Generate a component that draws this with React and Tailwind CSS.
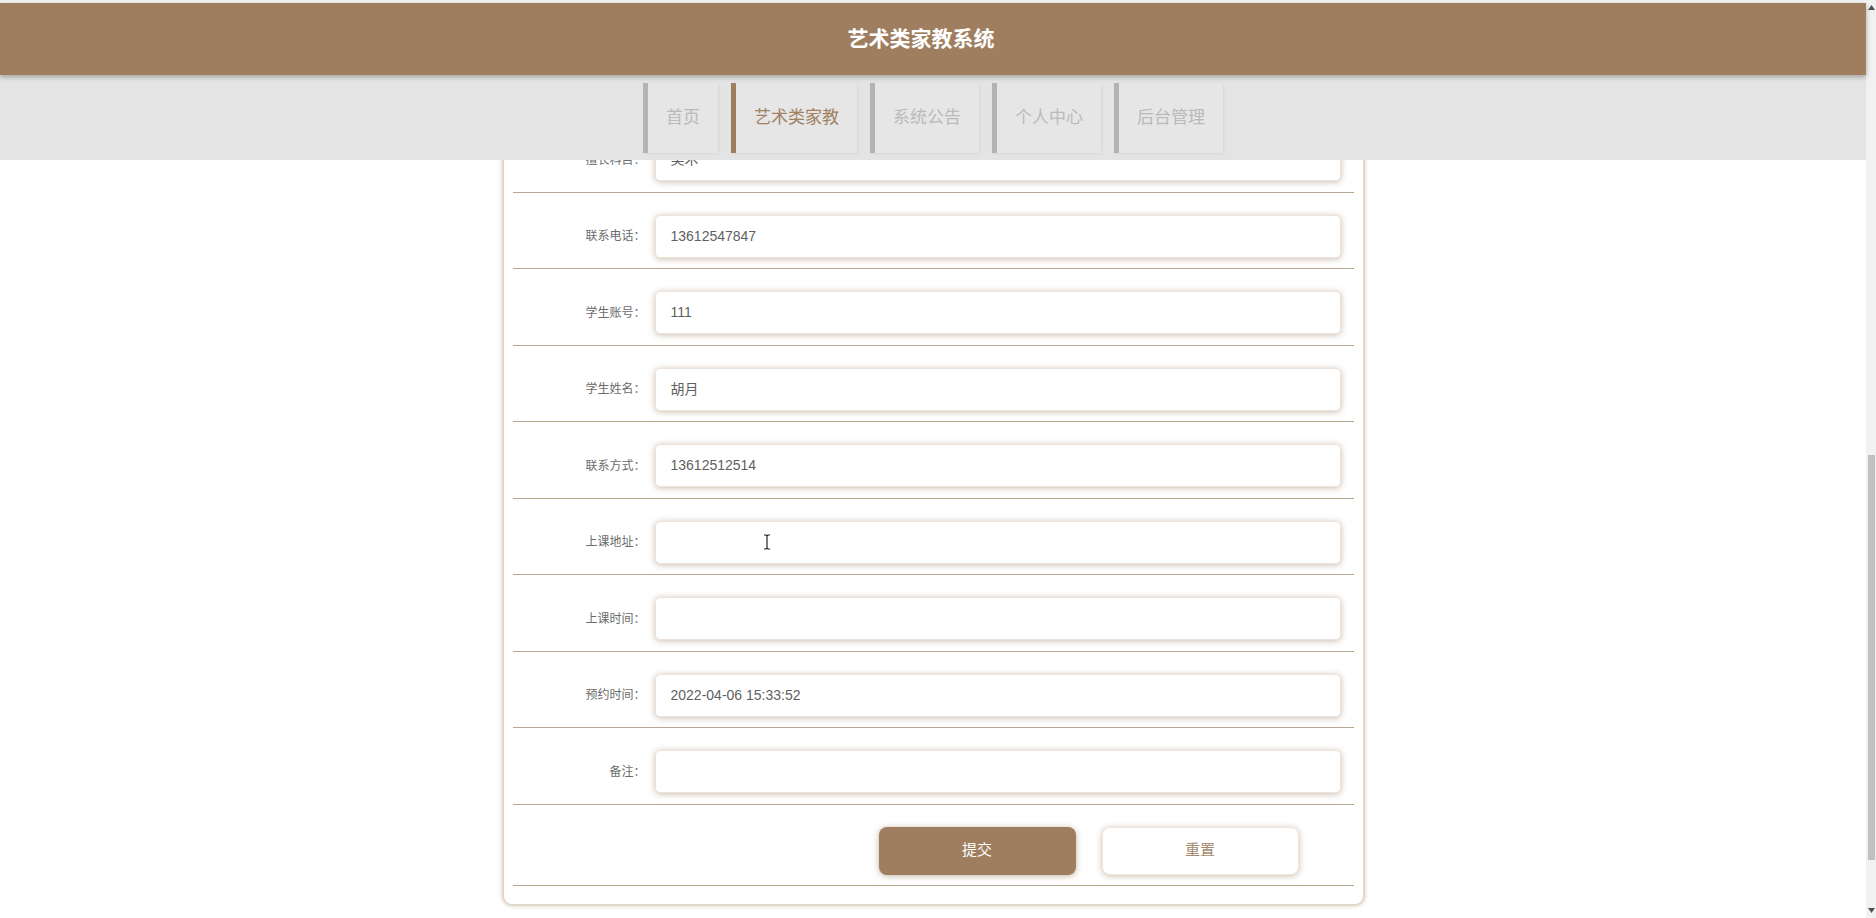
import React from "react";

const navItems = [
  { label: "首页" },
  { label: "艺术类家教", active: true },
  { label: "系统公告" },
  { label: "个人中心" },
  { label: "后台管理" },
];

const fields = [
  { label: "擅长科目：", value: "美术" },
  { label: "联系电话：", value: "13612547847" },
  { label: "学生账号：", value: "111" },
  { label: "学生姓名：", value: "胡月" },
  { label: "联系方式：", value: "13612512514" },
  { label: "上课地址：", value: "", cursor: true },
  { label: "上课时间：", value: "" },
  { label: "预约时间：", value: "2022-04-06 15:33:52" },
  { label: "备注：", value: "" },
];

const FormRow = ({ label, value, cursor }) => (
  <div className="flex items-center pt-[22px] pb-[10.5px] border-b border-[#b9a690]">
    <div className="w-[133px] text-right text-[12px] text-[#6b6b6b]">{label}</div>
    <div className="relative ml-[9px] w-[686px] h-[43px] flex items-center pl-[15px] bg-white rounded-[5px] border border-[#ece4dc] shadow-[0_1px_6px_rgba(140,105,70,0.45)] text-[14px] text-[#5f5f5f]">
      {value}
      {cursor && (
        <svg className="absolute left-[107px] top-[12px]" width="8" height="16" viewBox="0 0 8 16">
          <path d="M1 1h2l1 1 1-1h2M4 2v12M1 15h2l1-1 1 1h2" stroke="#222" strokeWidth="1.2" fill="none" />
        </svg>
      )}
    </div>
  </div>
);

export default function App() {
  return (
    <div
      className="flex w-full h-[918px] overflow-hidden bg-white"
      style={{ fontFamily: '"Liberation Sans", "Noto Sans CJK SC", sans-serif' }}
    >
      <div className="relative flex-1">
        {/* fixed header + nav */}
        <div className="absolute top-0 left-0 right-0 z-10">
          <div className="h-[3px] bg-[#f2f2f2]" />
          <div className="relative z-10 h-[72px] flex items-center justify-center pr-[24px] bg-[#9e7e5f] shadow-[0_2px_5px_rgba(0,0,0,0.3)]">
            <span className="text-white text-[21px] font-bold">艺术类家教系统</span>
          </div>
          <div className="h-[85px] bg-[#e4e4e4] flex justify-center pt-[8px] gap-[13px]">
            {navItems.map((item) => (
              <div
                key={item.label}
                className={
                  item.active
                    ? "h-[70px] flex items-center px-[18px] border-l-[5px] border-[#9e7e5f] bg-[#e6e6e6] shadow-[1px_1px_3px_rgba(0,0,0,0.06)] text-[17px] text-[#a0805f]"
                    : "h-[70px] flex items-center px-[18px] border-l-[5px] border-[#b3b3b3] bg-[#e6e6e6] shadow-[1px_1px_3px_rgba(0,0,0,0.06)] text-[17px] text-[#bababa]"
                }
              >
                {item.label}
              </div>
            ))}
          </div>
        </div>

        {/* scrolled page content */}
        <div className="flex justify-center pt-[114px]">
          <div className="w-[863px] px-[9px] pb-[18px] bg-white border-2 border-[#e3d7cb] rounded-b-[10px] shadow-[0_0_4px_rgba(150,120,90,0.35)]">
            {fields.map((f) => (
              <FormRow key={f.label} {...f} />
            ))}
            <div className="flex pt-[22px] pb-[10.5px] border-b border-[#b9a690] pl-[366px] gap-[26px]">
              <button className="w-[197px] h-[48px] rounded-[8px] bg-[#9e7e5f] text-white text-[15px] shadow-[0_1px_6px_rgba(140,105,70,0.5)]">
                提交
              </button>
              <button className="w-[197px] h-[48px] rounded-[8px] bg-white text-[#a48a72] text-[15px] border border-[#efe7df] shadow-[0_1px_6px_rgba(140,105,70,0.45)]">
                重置
              </button>
            </div>
          </div>
        </div>
      </div>

      {/* scrollbar */}
      <div className="w-[10px] h-full bg-[#f1f1f1] flex flex-col items-center">
        <svg className="mt-[5px]" width="7" height="5" viewBox="0 0 7 5">
          <path d="M3.5 0L7 5H0z" fill="#505050" />
        </svg>
        <div className="mt-[445px] w-[7px] h-[405px] bg-[#c1c1c1] ml-[1px]" />
        <div className="flex-1" />
        <svg className="mb-[5px]" width="7" height="5" viewBox="0 0 7 5">
          <path d="M0 0H7L3.5 5z" fill="#505050" />
        </svg>
      </div>
    </div>
  );
}
